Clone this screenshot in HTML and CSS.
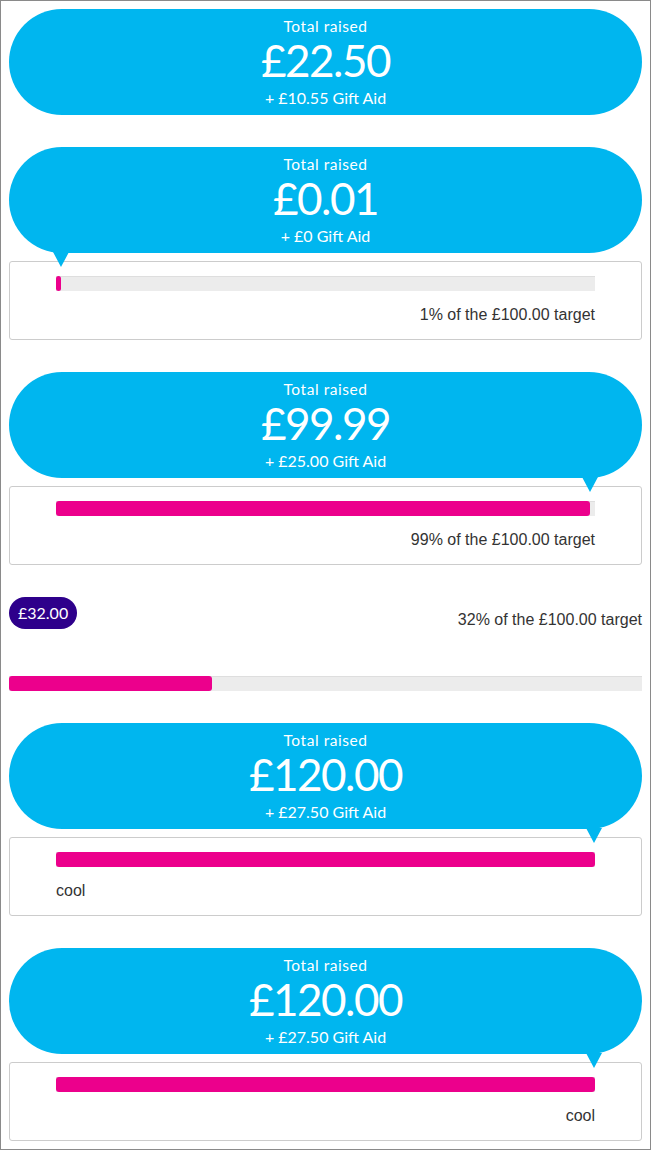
FILE: index.html
```html
<!DOCTYPE html>
<html lang="en">
<head>
<meta charset="utf-8">
<title>Totaliser</title>
<link rel="stylesheet" href="styles.css">
</head>
<body>
<div class="page">

  <section class="section">
    <div class="bubble">
      <div class="bubble-label">Total raised</div>
      <div class="bubble-amount">£22.50</div>
      <div class="bubble-gift">+ £10.55 Gift Aid</div>
    </div>
  </section>

  <section class="section">
    <div class="bubble">
      <div class="bubble-label">Total raised</div>
      <div class="bubble-amount">£0.01</div>
      <div class="bubble-gift">+ £0 Gift Aid</div>
      <div class="tail-track"><span class="tail" style="left: calc(1% - 8px)"></span></div>
    </div>
    <div class="box">
      <div class="track"><div class="fill" style="width: 1%"></div></div>
      <div class="caption caption-right">1% of the £100.00 target</div>
    </div>
  </section>

  <section class="section">
    <div class="bubble">
      <div class="bubble-label">Total raised</div>
      <div class="bubble-amount">£99.99</div>
      <div class="bubble-gift">+ £25.00 Gift Aid</div>
      <div class="tail-track"><span class="tail" style="left: calc(99% - 8px)"></span></div>
    </div>
    <div class="box">
      <div class="track"><div class="fill" style="width: 99%"></div></div>
      <div class="caption caption-right">99% of the £100.00 target</div>
    </div>
  </section>

  <section class="section">
    <div class="badge-row">
      <span class="badge">£32.00</span>
      <span class="badge-caption">32% of the £100.00 target</span>
    </div>
    <div class="track track-wide"><div class="fill" style="width: 32%"></div></div>
  </section>

  <section class="section">
    <div class="bubble">
      <div class="bubble-label">Total raised</div>
      <div class="bubble-amount">£120.00</div>
      <div class="bubble-gift">+ £27.50 Gift Aid</div>
      <div class="tail-track"><span class="tail" style="left: calc(100% - 9px)"></span></div>
    </div>
    <div class="box">
      <div class="track"><div class="fill" style="width: 100%"></div></div>
      <div class="caption">cool</div>
    </div>
  </section>

  <section class="section">
    <div class="bubble">
      <div class="bubble-label">Total raised</div>
      <div class="bubble-amount">£120.00</div>
      <div class="bubble-gift">+ £27.50 Gift Aid</div>
      <div class="tail-track"><span class="tail" style="left: calc(100% - 9px)"></span></div>
    </div>
    <div class="box">
      <div class="track"><div class="fill" style="width: 100%"></div></div>
      <div class="caption caption-right">cool</div>
    </div>
  </section>

</div>
</body>
</html>
```

FILE: styles.css
```css
* {
  box-sizing: border-box;
}

html, body {
  margin: 0;
  padding: 0;
  background: #ffffff;
}

.page {
  min-height: 100vh;
  border: 1px solid #8a8a8a;
  padding: 8px;
  display: flex;
  flex-direction: column;
  gap: 32px;
  font-family: "Liberation Sans", Arial, sans-serif;
  color: #333333;
}

.section {
  display: flex;
  flex-direction: column;
}

.bubble {
  position: relative;
  height: 106px;
  border-radius: 53px;
  background: #00b6ef;
  color: #ffffff;
  text-align: center;
  font-family: Lato, "Open Sans", sans-serif;
  padding-top: 7px;
}

.bubble-label {
  font-size: 15.5px;
  line-height: 20px;
  letter-spacing: 0.55px;
}

.bubble-amount {
  font-size: 44px;
  line-height: 48px;
  font-weight: 400;
  letter-spacing: -1.5px;
}

.bubble-gift {
  font-size: 16px;
  line-height: 21px;
  margin-top: 3px;
}

.tail-track {
  position: absolute;
  left: 47px;
  right: 47px;
  top: 100%;
  height: 0;
}

.tail {
  position: absolute;
  top: -1px;
  width: 0;
  height: 0;
  border-left: 8px solid transparent;
  border-right: 8px solid transparent;
  border-top: 15px solid #00b6ef;
  z-index: 2;
}

.box {
  margin-top: 8px;
  border: 1px solid #cccccc;
  border-radius: 3px;
  padding: 14px 46px 13px;
  display: flex;
  flex-direction: column;
  gap: 13px;
}

.track {
  height: 15px;
  background: #ececec;
  box-shadow: inset 0 1px 0 #dedede;
}

.fill {
  height: 100%;
  background: #ec008c;
  border-radius: 3px;
}

.caption {
  font-size: 16px;
  line-height: 22px;
  color: #333333;
}

.caption-right {
  text-align: right;
}

.badge-row {
  display: flex;
  justify-content: space-between;
  align-items: flex-start;
}

.badge {
  height: 32px;
  line-height: 32px;
  padding: 0 9px;
  border-radius: 16px;
  background: #2e008b;
  color: #ffffff;
  font-family: Lato, "Open Sans", sans-serif;
  font-size: 16px;
}

.badge-caption {
  margin-top: 12px;
  font-size: 16px;
  line-height: 22px;
}

.track-wide {
  margin-top: 45px;
}
```
